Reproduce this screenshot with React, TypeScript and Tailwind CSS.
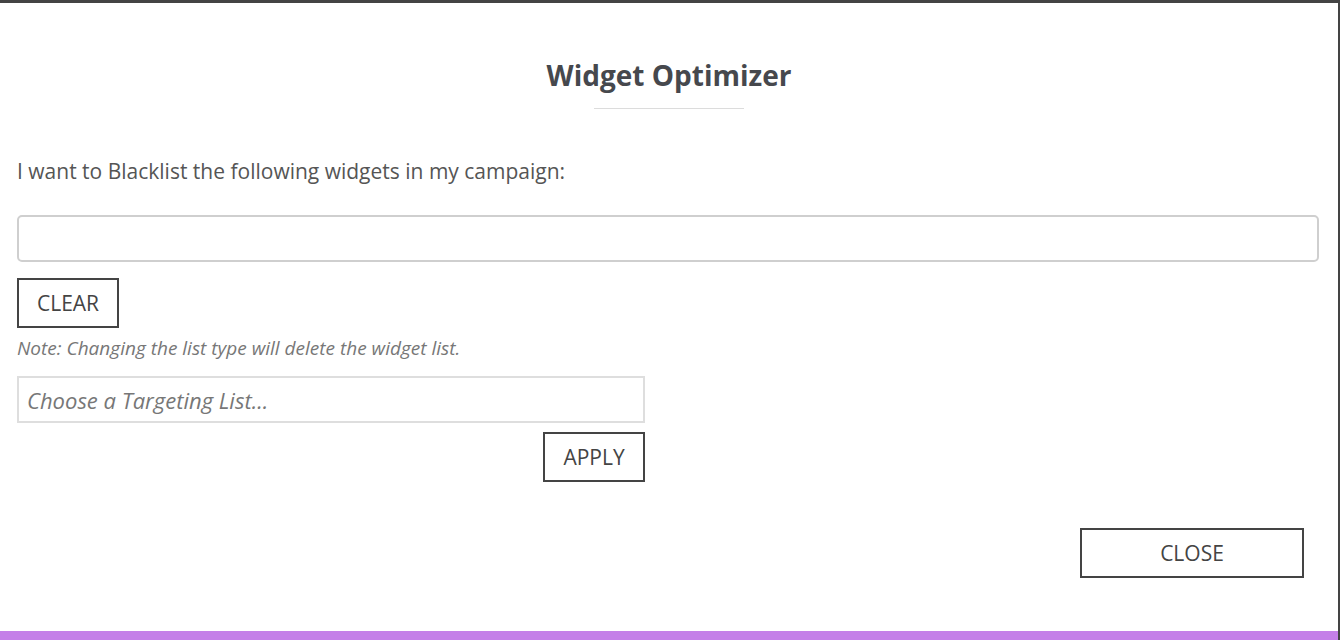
import React, { useState } from 'react';

export default function App() {
  const [widgets, setWidgets] = useState('');
  const [list, setList] = useState('');

  return (
    <div className="flex h-[640px] w-full bg-white" style={{ fontFamily: '"Open Sans", sans-serif' }}>
      <div className="flex h-full w-[1340px] flex-col border-t-[3px] border-r-2 border-[#444]">
        {/* Header */}
        <div className="flex flex-col items-center pt-[54px]">
          <h1 className="text-[28px] leading-[36px] font-bold text-[#46484d]">Widget Optimizer</h1>
          <div className="mt-[15px] h-px w-[150px] bg-[#dcdcdc]" />
        </div>

        {/* Body */}
        <div className="flex flex-1 flex-col pl-[17px] pr-[19px]">
          <p className="mt-[48px] text-[21px] leading-[28px] text-[#555]">
            I want to Blacklist the following widgets in my campaign:
          </p>

          <input
            value={widgets}
            onChange={(e) => setWidgets(e.target.value)}
            className="mt-[30px] h-[47px] w-full shrink-0 rounded-[5px] border-2 border-[#cfcfcf] px-3 text-[20px] outline-none"
          />

          <div className="mt-[16px]">
            <button className="h-[50px] w-[102px] border-2 border-[#444] pt-px text-[21px] font-medium text-[#444]">
              CLEAR
            </button>
          </div>

          <p className="mt-[8px] text-[19px] leading-[24px] italic text-[#777]">
            Note: Changing the list type will delete the widget list.
          </p>

          <div className="mt-[16px] flex w-[628px] flex-col items-end">
            <input
              value={list}
              onChange={(e) => setList(e.target.value)}
              placeholder="Choose a Targeting List..."
              className="h-[47px] w-full shrink-0 border-2 border-[#dedede] px-[8px] text-[22px] italic text-[#555] outline-none placeholder:text-[#777]"
            />
            <button className="mt-[9px] h-[50px] w-[102px] border-2 border-[#444] pt-px text-[21px] font-medium text-[#444]">
              APPLY
            </button>
          </div>

          <div className="mt-[46px] flex justify-end pr-[15px]">
            <button className="h-[50px] w-[224px] border-2 border-[#444] pt-px text-[21px] font-medium text-[#444]">
              CLOSE
            </button>
          </div>
        </div>

        <div className="h-[9px] w-full bg-[#c47fe8]" />
      </div>
    </div>
  );
}
